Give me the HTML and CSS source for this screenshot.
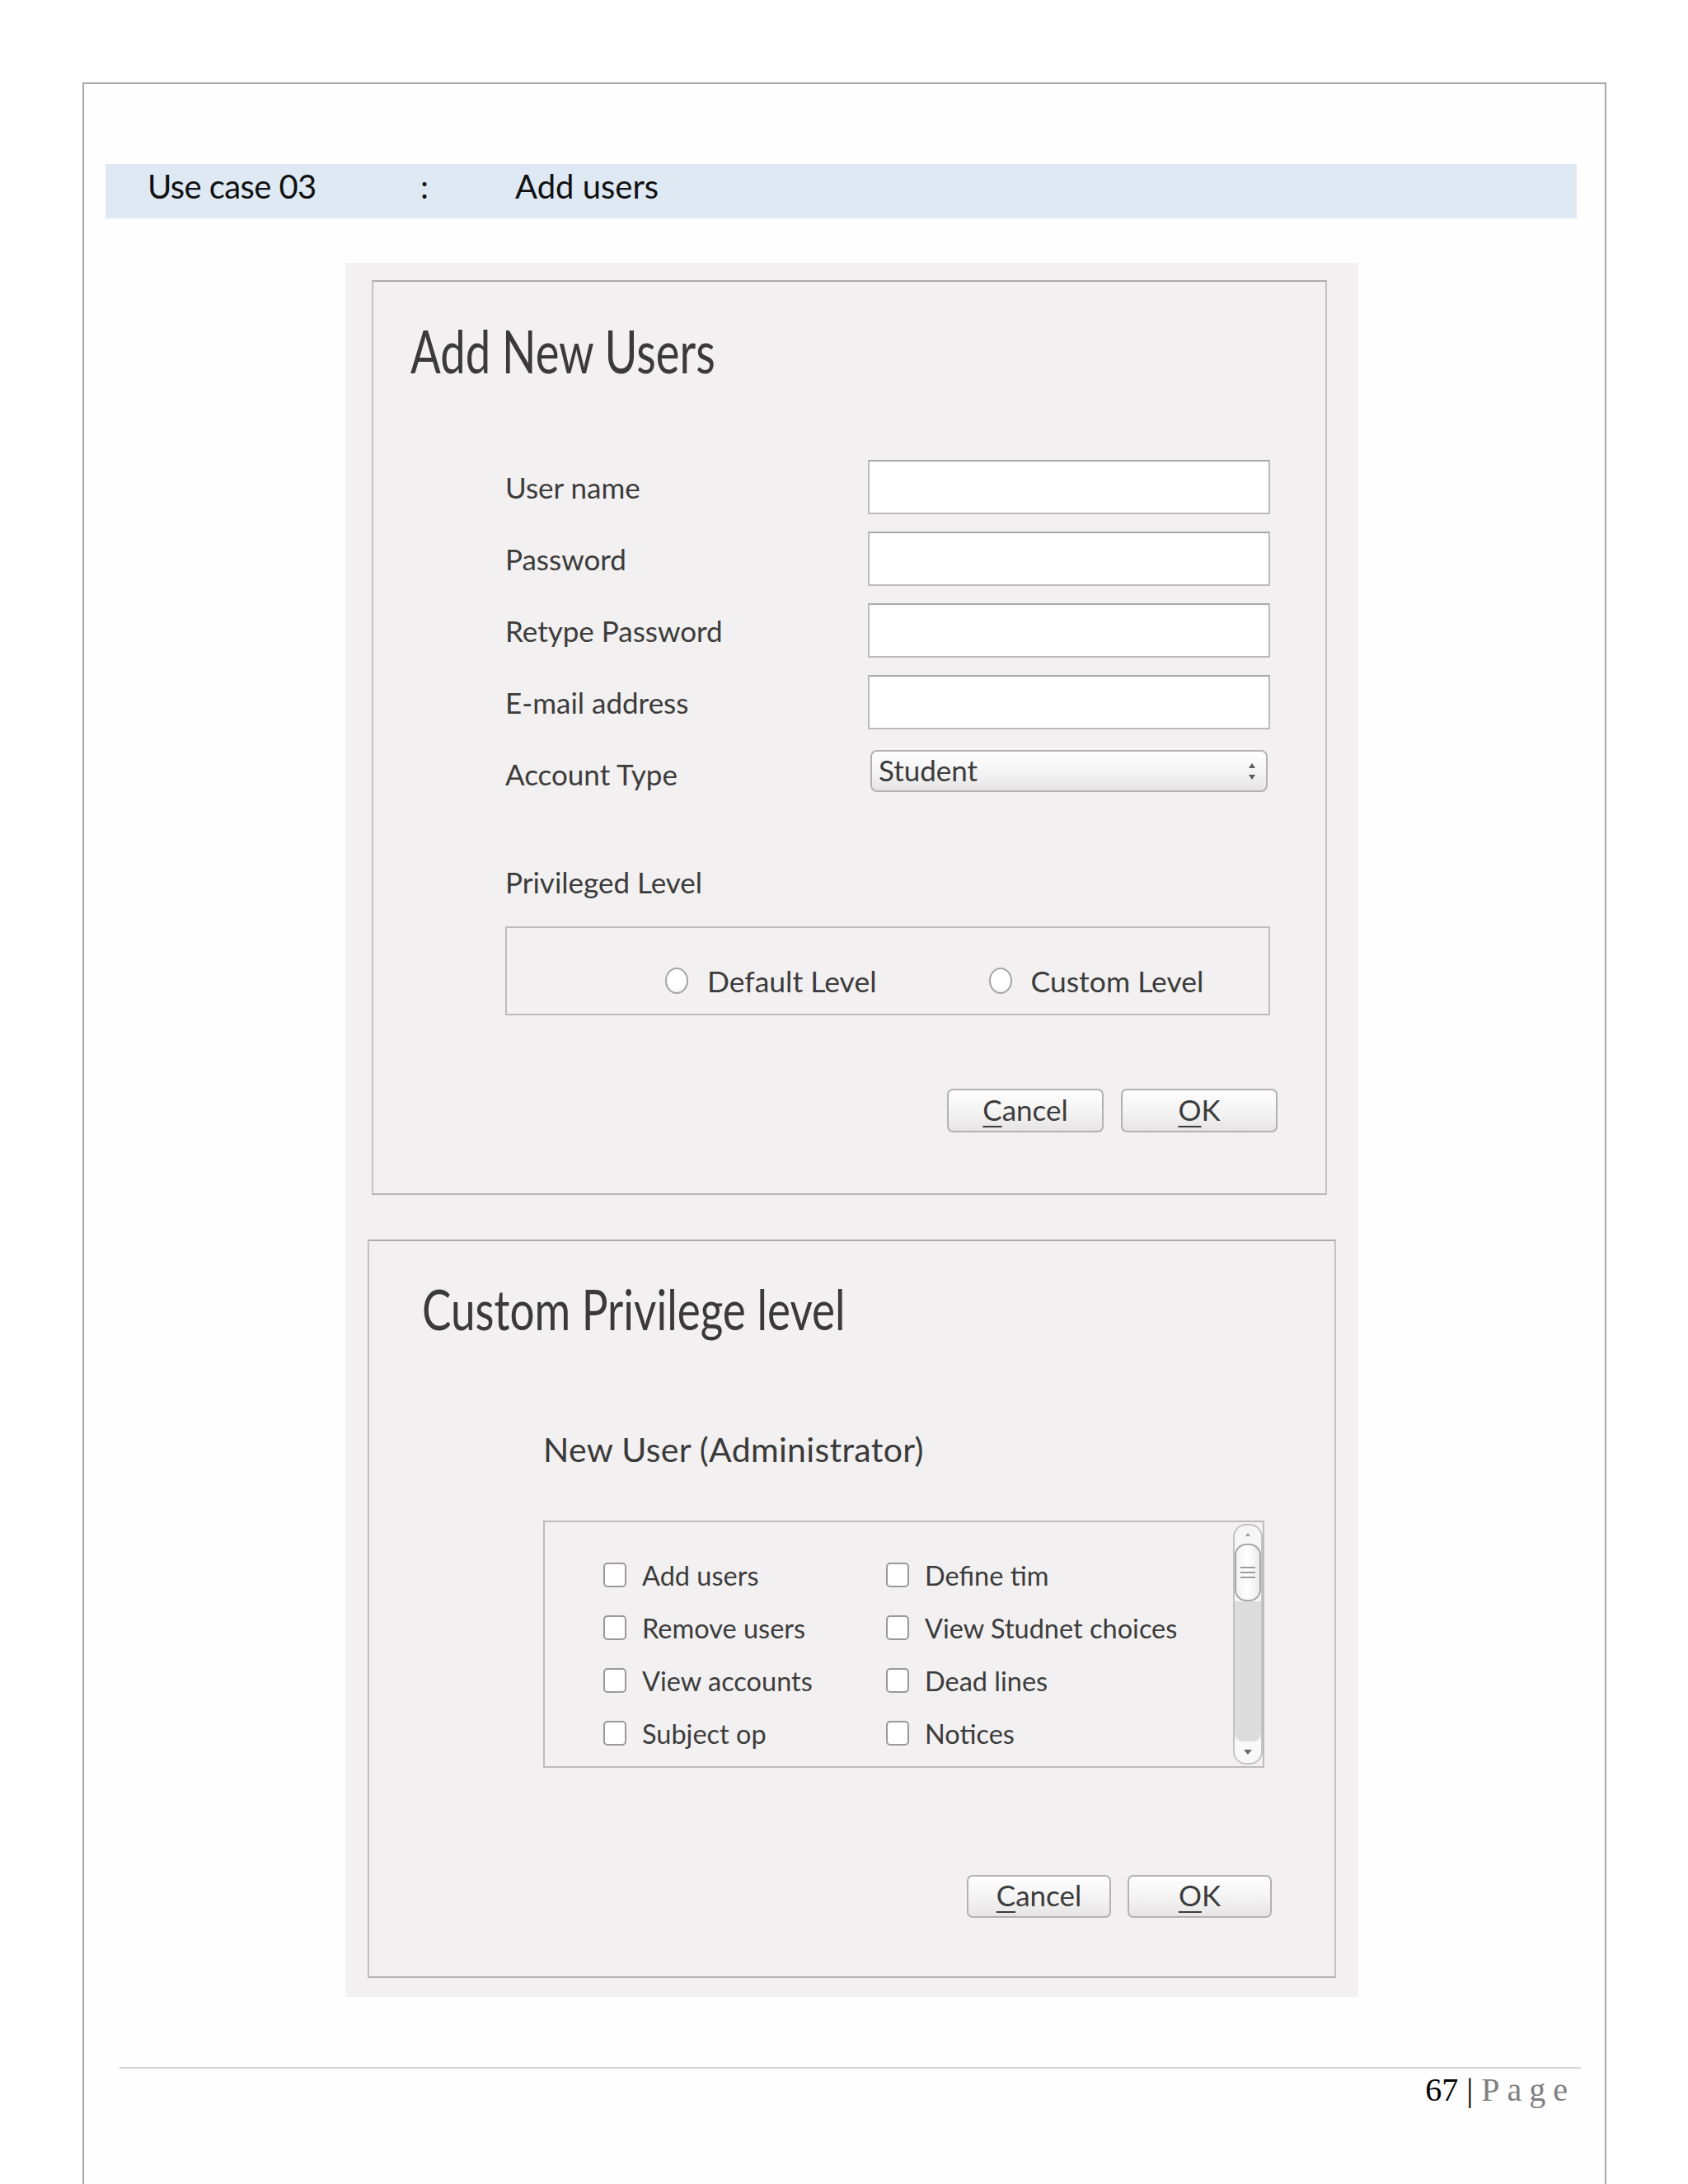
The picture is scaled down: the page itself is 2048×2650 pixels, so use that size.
FILE: index.html
```html
<!DOCTYPE html>
<html>
<head>
<meta charset="utf-8">
<title>Use case 03 - Add users</title>
<link rel="stylesheet" href="styles.css">
</head>
<body>
<div class="page">
  <div class="uc-bar">
    <span class="uc-id">Use case 03</span><span class="uc-colon">:</span><span class="uc-name">Add users</span>
  </div>

  <div class="shot">
    <section class="dlg dlg1">
      <h1 class="dlg-title"><span class="cond">Add New Users</span></h1>
      <div class="form">
        <label class="lbl">User name</label><div class="field"></div>
        <label class="lbl">Password</label><div class="field"></div>
        <label class="lbl">Retype Password</label><div class="field"></div>
        <label class="lbl">E-mail address</label><div class="field"></div>
        <label class="lbl">Account Type</label>
        <div class="select">
          <span>Student</span>
          <svg class="spin" width="12" height="28" viewBox="0 0 12 28"><path d="M6 4 L10 10 L2 10 Z" fill="#5a5a5a"/><path d="M2 18 L10 18 L6 24 Z" fill="#5a5a5a"/></svg>
        </div>
      </div>
      <div class="lbl priv">Privileged Level</div>
      <div class="group">
        <span class="radio"><span class="radio-dot"></span>Default Level</span>
        <span class="radio r2"><span class="radio-dot"></span>Custom Level</span>
      </div>
      <div class="btns btns1">
        <button class="btn"><u>C</u>ancel</button>
        <button class="btn"><u>O</u>K</button>
      </div>
    </section>

    <section class="dlg dlg2">
      <h1 class="dlg-title t2"><span class="cond">Custom Privilege level</span></h1>
      <div class="sub">New User (Administrator)</div>
      <div class="listbox">
        <div class="checks">
          <span class="chk"><span class="box"></span>Add users</span>
          <span class="chk"><span class="box"></span>Define tim</span>
          <span class="chk"><span class="box"></span>Remove users</span>
          <span class="chk"><span class="box"></span>View Studnet choices</span>
          <span class="chk"><span class="box"></span>View accounts</span>
          <span class="chk"><span class="box"></span>Dead lines</span>
          <span class="chk"><span class="box"></span>Subject op</span>
          <span class="chk"><span class="box"></span>Notices</span>
        </div>
        <div class="scroll">
          <div class="sc-up"><svg width="8" height="6" viewBox="0 0 8 6"><path d="M4 1 L7 5 L1 5 Z" fill="#9a9a9a"/></svg></div>
          <div class="sc-thumb"><span></span><span></span><span></span></div>
          <div class="sc-track"></div>
          <div class="sc-down"><svg width="12" height="8" viewBox="0 0 12 8"><path d="M1 1 L11 1 L6 7 Z" fill="#6a6a6a"/></svg></div>
        </div>
      </div>
      <div class="btns btns2">
        <button class="btn"><u>C</u>ancel</button>
        <button class="btn"><u>O</u>K</button>
      </div>
    </section>
  </div>

  <footer class="foot">
    <div class="pnum">67 | <span class="pg">Page</span></div>
  </footer>
</div>
</body>
</html>
```

FILE: styles.css
```css
html, body {
  margin: 0;
  padding: 0;
  background: #ffffff;
}

body {
  font-family: Lato, "Open Sans", "Noto Sans", sans-serif;
  color: #3c3c3c;
}

.page {
  margin: 100px 0 0 100px;
  width: 1845px;
  min-height: 2600px;
  border: 2px solid #a9a9a9;
  border-bottom: none;
  background: #fefefe;
}

/* use case header */
.uc-bar {
  margin: 97px 0 0 26px;
  width: 1785px;
  height: 66px;
  box-sizing: border-box;
  padding: 0 0 12px 51px;
  background: #dee9f4;
  display: flex;
  align-items: center;
  font-size: 40px;
  color: #111111;
}
.uc-id { flex: none; width: 331px; letter-spacing: -0.6px; }
.uc-colon { flex: none; width: 115px; }
.uc-name { flex: none; }

/* screenshot area */
.shot {
  margin: 54px 0 0 317px;
  width: 1229px;
  box-sizing: border-box;
  padding: 21px 0 23px;
  background: #f2f0f0;
}

.dlg {
  box-sizing: border-box;
  border: 2px solid #c3c1c1;
  border-top-color: #adabab;
  border-bottom-color: #b3b1b1;
  background: #f2f0f0;
}

.dlg1 {
  margin-left: 32px;
  width: 1159px;
  height: 1110px;
  padding: 47px 0 0 45px;
}

.dlg-title {
  margin: 0;
  font-size: 72px;
  line-height: 72px;
  font-weight: 400;
  color: #3a3a3a;
  white-space: nowrap;
}
.dlg-title.t2 {
  font-size: 68px;
  line-height: 68px;
}
.cond {
  display: inline-block;
  transform: scaleX(0.755);
  transform-origin: left center;
}
.t2 .cond {
  transform: scaleX(0.78);
}

.form {
  display: grid;
  grid-template-columns: 440px 488px;
  grid-auto-rows: 66px;
  row-gap: 21px;
  margin: 97px 0 0 115px;
}

.lbl {
  font-size: 35px;
  color: #3c3c3c;
  align-self: center;
}

.field {
  background: #ffffff;
  border: 2px solid #bbb9b9;
  border-top-color: #a9a7a7;
}

.select {
  align-self: start;
  margin: 4px 0 0 3px;
  height: 51px;
  width: 482px;
  box-sizing: border-box;
  border: 2px solid #b3b1b1;
  border-radius: 8px;
  background: linear-gradient(#ffffff, #f3f2f2 60%, #e6e4e4);
  display: flex;
  align-items: center;
  justify-content: space-between;
  padding: 0 11px 4px 8px;
  font-size: 35px;
  color: #3c3c3c;
}
.spin { flex: none; margin-top: 4px; }

.priv {
  margin: 76px 0 0 115px;
  line-height: 44px;
}

.group {
  margin: 32px 0 0 115px;
  width: 928px;
  height: 108px;
  box-sizing: border-box;
  border: 2px solid #bdbbbb;
  display: flex;
  align-items: center;
  padding: 24px 0 0 192px;
}

.radio {
  display: flex;
  align-items: center;
  gap: 23px;
  font-size: 35.5px;
  color: #3c3c3c;
}
.radio.r2 { margin-left: 136px; }
.radio-dot {
  flex: none;
  width: 24px;
  height: 28px;
  border: 2px solid #a5a3a3;
  border-radius: 50%;
  background: radial-gradient(circle at 50% 35%, #ffffff 55%, #eeeeee);
}

.btns {
  display: flex;
  justify-content: flex-end;
}
.btns1 {
  gap: 21px;
  margin: 89px 58px 0 0;
}
.btns1 .btn { width: 190px; height: 53px; }

.btn {
  font-family: Lato, "Open Sans", sans-serif;
  font-size: 35px;
  color: #3c3c3c;
  padding: 0 0 4px;
  box-sizing: border-box;
  border: 2px solid #b3b1b1;
  border-radius: 7px;
  background: linear-gradient(#fefefe, #f4f3f3 55%, #e6e4e4);
}
.btn u {
  text-decoration-thickness: 2px;
  text-underline-offset: 6px;
}

/* second dialog */
.dlg2 {
  margin: 54px 0 0 27px;
  width: 1175px;
  height: 896px;
  padding: 48px 0 0 64px;
}

.sub {
  margin: 112px 0 0 147px;
  font-size: 41px;
  line-height: 50px;
  letter-spacing: 0.3px;
  color: #3a3a3a;
}

.listbox {
  margin: 61px 0 0 147px;
  width: 875px;
  height: 300px;
  box-sizing: border-box;
  border: 2px solid #bdbbbb;
  display: flex;
}

.checks {
  flex: 1;
  display: grid;
  grid-template-columns: 343px auto;
  grid-auto-rows: 64px;
  align-content: start;
  padding: 32px 0 0 71px;
}

.chk {
  display: flex;
  align-items: center;
  gap: 19px;
  font-size: 32.5px;
  color: #3c3c3c;
}
.box {
  flex: none;
  width: 24px;
  height: 26px;
  border: 2px solid #9a9898;
  border-radius: 5px;
  background: #ffffff;
}

.scroll {
  flex: none;
  width: 36px;
  margin: 2px 0 2px;
  box-sizing: border-box;
  border: 2px solid #c4c2c2;
  border-radius: 16px;
  background: #f7f6f6;
  display: flex;
  flex-direction: column;
  overflow: hidden;
}
.sc-up {
  height: 22px;
  display: flex;
  justify-content: center;
  align-items: center;
}
.sc-thumb {
  height: 70px;
  box-sizing: border-box;
  border: 2px solid #a9a7a7;
  border-radius: 14px;
  background: linear-gradient(90deg, #f2f2f2, #ffffff 50%, #eaeaea);
  display: flex;
  flex-direction: column;
  justify-content: center;
  align-items: center;
  gap: 4px;
}
.sc-thumb span {
  width: 18px;
  height: 2px;
  background: #9d9b9b;
}
.sc-track {
  flex: 1;
  background: #dddcdc;
  border-radius: 0 0 10px 10px;
}
.sc-down {
  height: 26px;
  display: flex;
  justify-content: center;
  align-items: center;
  background: #f9f9f9;
}

.btns2 {
  gap: 20px;
  margin: 130px 76px 0 0;
}
.btns2 .btn { width: 175px; height: 52px; }

/* footer */
.foot {
  margin: 85px 0 0 43px;
  width: 1773px;
  border-top: 2px solid #d2d2d2;
}
.pnum {
  margin-top: 3px;
  text-align: right;
  padding-right: 7px;
  font-family: "Liberation Serif", "Times New Roman", serif;
  font-size: 40px;
  line-height: 46px;
  color: #000000;
}
.pg {
  color: #808080;
  letter-spacing: 9px;
}
```
